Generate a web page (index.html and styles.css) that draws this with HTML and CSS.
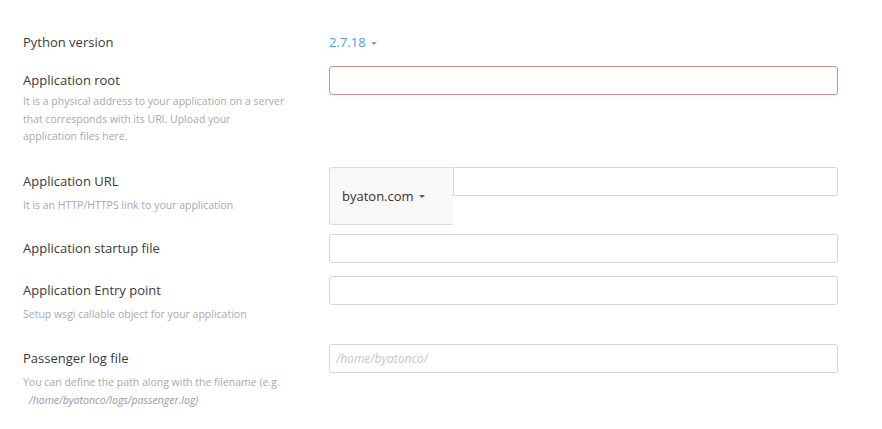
FILE: index.html
```html
<!DOCTYPE html>
<html lang="en">
<head>
    <meta charset="UTF-8">
    <meta name="viewport" content="width=device-width, initial-scale=1.0">
    <title>Setup Python App</title>
    <link rel="stylesheet" href="styles.css">
</head>
<body>
    <div class="form">
        <!-- Python version -->
        <div class="row row-version">
            <div class="label-col">
                <div class="label">Python version</div>
            </div>
            <div class="field-col">
                <span class="version">2.7.18 <span class="caret"></span></span>
            </div>
        </div>

        <!-- Application root -->
        <div class="row row-root">
            <div class="label-col">
                <div class="label">Application root</div>
                <div class="help">It is a physical address to your application on a server<br>that corresponds with its URI. Upload your<br>application files here.</div>
            </div>
            <div class="field-col">
                <input class="text-input invalid" type="text">
            </div>
        </div>

        <!-- Application URL -->
        <div class="row row-url">
            <div class="label-col">
                <div class="label">Application URL</div>
                <div class="help">It is an HTTP/HTTPS link to your application</div>
            </div>
            <div class="field-col url-group">
                <div class="domain-select">byaton.com <span class="caret dark"></span></div>
                <input class="text-input url-input" type="text">
            </div>
        </div>

        <!-- Startup file -->
        <div class="row row-startup">
            <div class="label-col">
                <div class="label">Application startup file</div>
            </div>
            <div class="field-col">
                <input class="text-input" type="text">
            </div>
        </div>

        <!-- Entry point -->
        <div class="row row-entry">
            <div class="label-col">
                <div class="label">Application Entry point</div>
                <div class="help">Setup wsgi callable object for your application</div>
            </div>
            <div class="field-col">
                <input class="text-input" type="text">
            </div>
        </div>

        <!-- Passenger log -->
        <div class="row row-log">
            <div class="label-col">
                <div class="label">Passenger log file</div>
                <div class="help">You can define the path along with the filename (e.g.<br><em class="path">/home/byatonco/logs/passenger.log)</em></div>
            </div>
            <div class="field-col">
                <input class="text-input" type="text" placeholder="/home/byatonco/">
            </div>
        </div>
    </div>
</body>
</html>
```

FILE: styles.css
```css
html, body {
    margin: 0;
    padding: 0;
    background: #fff;
    font-family: "Open Sans", Arial, sans-serif;
}
.form {
    padding: 33px 0 0 23px;
    font-size: 13px;
    line-height: 18px;
}
.row {
    display: flex;
    align-items: flex-start;
}
.row-root {
    margin-top: 15px;
}
.row-url {
    margin-top: 21.5px;
}
.row-startup {
    margin-top: 9px;
}
.row-entry {
    margin-top: 13px;
}
.row-log {
    margin-top: 20.5px;
}
.label-col {
    width: 290px;
    margin-right: 16px;
}
.row-root .label-col,
.row-url .label-col,
.row-startup .label-col,
.row-entry .label-col,
.row-log .label-col {
    padding-top: 5px;
}
.label {
    font-size: 13px;
    line-height: 18px;
    color: #3a3a3a;
}
.help {
    margin-top: 7px;
    font-size: 10.5px;
    line-height: 17.5px;
    color: #a9a9a9;
    white-space: nowrap;
}
.row-root .help {
    margin-top: 4px;
}
.help .path {
    display: inline-block;
    margin-left: 6px;
    font-style: italic;
    color: #999;
}
.field-col {
    width: 509px;
}
.version {
    font-size: 13px;
    line-height: 18px;
    color: #4aa3d4;
}
.caret {
    display: inline-block;
    width: 0;
    height: 0;
    margin-left: 2px;
    vertical-align: middle;
    border-left: 3px solid transparent;
    border-right: 3px solid transparent;
    border-top: 3px solid #999;
}
.caret.dark {
    margin-left: 5px;
    border-top-color: #555;
}
.text-input {
    display: block;
    box-sizing: border-box;
    width: 100%;
    height: 29px;
    margin: 0;
    padding: 0 6px;
    border: 1px solid #d6d6d6;
    border-radius: 3px;
    background: #fff;
    font-family: "Open Sans", Arial, sans-serif;
    font-size: 12px;
    color: #333;
    outline: none;
}
.text-input::placeholder {
    font-style: italic;
    color: #c6c6c6;
}
.text-input.invalid {
    border-color: #dc8b8b;
}
.url-group {
    display: flex;
    align-items: flex-start;
}
.domain-select {
    box-sizing: border-box;
    width: 124px;
    height: 58px;
    padding-left: 12px;
    display: flex;
    align-items: center;
    background: #f8f8f8;
    border: 1px solid #dcdcdc;
    border-right: none;
    border-radius: 3px 0 0 3px;
    font-size: 13px;
    color: #333;
}
.url-input {
    flex: 1;
    width: auto;
    border-radius: 0 3px 3px 0;
}
```
